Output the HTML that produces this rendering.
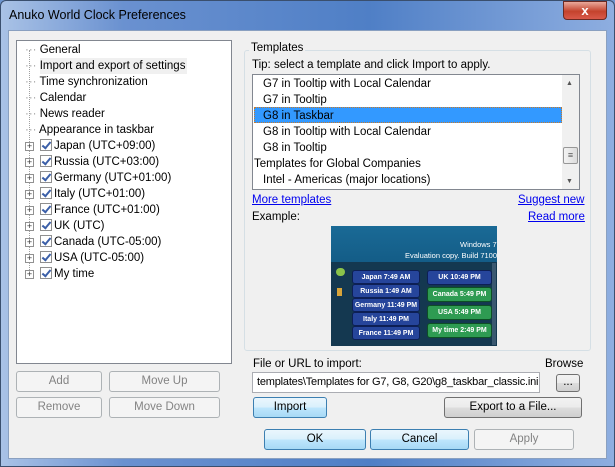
<!DOCTYPE html><html><head><style>
*{margin:0;padding:0;box-sizing:border-box}
body{width:615px;height:467px;overflow:hidden;font-family:"Liberation Sans",sans-serif;font-size:11.5px;color:#000;position:relative;background:#6d95cf}
.a{position:absolute;white-space:nowrap}
.title{left:0;top:0;width:615px;height:467px;border-radius:6px 6px 0 0;background:linear-gradient(90deg,#a9c2e6 0%,#6a91d0 20%,#4f7fc6 60%,#8eaee0 100%);border:1px solid #3a4f6e}
.client{left:8px;top:30px;width:599px;height:429px;background:#f0f0f0;border:1px solid #8aa0c0}
.btn{position:absolute;border:1px solid #707070;border-radius:3px;background:linear-gradient(#f2f2f2 0%,#ebebeb 50%,#dddddd 51%,#cfcfcf 100%);text-align:center;line-height:18px}
.dis{border-color:#adb2b5;background:#f4f4f4;color:#838383}
.blue{border-color:#3c7fb1;background:linear-gradient(#eaf6fd 0%,#d9f0fc 50%,#bee6fd 51%,#a7d9f5 100%)}
.tree div{position:absolute;left:0;white-space:nowrap;height:16px;line-height:16px}
.cb{display:inline-block;width:12px;height:12px;border:1px solid #8f8f8f;background:#fff;vertical-align:-2px;margin-right:2px;position:relative}
.cb:after{content:"";position:absolute;left:3px;top:0px;width:3px;height:7px;border:solid #3b5fa8;border-width:0 2px 2px 0;transform:rotate(40deg)}
.pl{display:inline-block;width:9px;height:9px;border:1px solid #919191;background:#fff;font-size:9px;line-height:7px;text-align:center;color:#333;vertical-align:0;margin-right:6px}
a{color:#0000ee;text-decoration:underline}
.chip{position:absolute;height:14px;border-radius:3px;color:#fff;font-size:7px;line-height:13px;text-align:center;font-weight:bold;overflow:hidden}
.bc{background:#26459b;border:1px solid #0d1f55}
.gc{background:#2e9b52;border:1px solid #0d4f25}
</style></head><body>
<div class="a title"></div>
<div class="a" style="left:9px;top:8px;font-size:12.5px;color:#000">Anuko World Clock Preferences</div>
<div class="a" style="left:563px;top:1px;width:44px;height:19px;border:1px solid #6b2a23;border-radius:0 0 4px 4px;background:linear-gradient(#e9a99c,#c4432d 55%,#d9594a);color:#fff;text-align:center;font-weight:bold;font-size:13px;line-height:17px">x</div>
<div class="a client"></div>

<div class="a" style="left:16px;top:40px;width:216px;height:324px;background:#fff;border:1px solid #828790"></div>
<div class="a" style="left:40px;top:58px;width:147px;height:16px;background:#f0f0f0"></div>
<div class="a" style="left:29px;top:50px;height:226px;border-left:1px dotted #a0a0a0"></div>
<div class="a tree" style="left:25px;top:42px;width:200px">
<div style="top:0"><span style="color:#a0a0a0">···</span> General</div>
<div style="top:16px"><span style="color:#a0a0a0">···</span> Import and export of settings</div>
<div style="top:32px"><span style="color:#a0a0a0">···</span> Time synchronization</div>
<div style="top:48px"><span style="color:#a0a0a0">···</span> Calendar</div>
<div style="top:64px"><span style="color:#a0a0a0">···</span> News reader</div>
<div style="top:80px"><span style="color:#a0a0a0">···</span> Appearance in taskbar</div>
<div style="top:96px"><span class="pl">+</span><span class="cb"></span>Japan (UTC+09:00)</div>
<div style="top:112px"><span class="pl">+</span><span class="cb"></span>Russia (UTC+03:00)</div>
<div style="top:128px"><span class="pl">+</span><span class="cb"></span>Germany (UTC+01:00)</div>
<div style="top:144px"><span class="pl">+</span><span class="cb"></span>Italy (UTC+01:00)</div>
<div style="top:160px"><span class="pl">+</span><span class="cb"></span>France (UTC+01:00)</div>
<div style="top:176px"><span class="pl">+</span><span class="cb"></span>UK (UTC)</div>
<div style="top:192px"><span class="pl">+</span><span class="cb"></span>Canada (UTC-05:00)</div>
<div style="top:208px"><span class="pl">+</span><span class="cb"></span>USA (UTC-05:00)</div>
<div style="top:224px"><span class="pl">+</span><span class="cb"></span>My time</div>
</div>

<div class="btn dis" style="left:16px;top:371px;width:86px;height:21px">Add</div>
<div class="btn dis" style="left:109px;top:371px;width:111px;height:21px">Move Up</div>
<div class="btn dis" style="left:16px;top:397px;width:86px;height:21px">Remove</div>
<div class="btn dis" style="left:109px;top:397px;width:111px;height:21px">Move Down</div>

<div class="a" style="left:244px;top:50px;width:347px;height:301px;border:1px solid #d5dfe5;border-radius:3px"></div>
<div class="a" style="left:249px;top:42px;background:#f0f0f0;padding:0 2px">Templates</div>
<div class="a" style="left:252px;top:59px">Tip: select a template and click Import to apply.</div>
<div class="a" style="left:252px;top:74px;width:328px;height:116px;background:#fff;border:1px solid #828790"></div>
<div class="a" style="left:254px;top:107px;width:308px;height:16px;background:#3399ff;border:1px dotted #c87a2a"></div>
<div class="a" style="left:263px;top:76px;line-height:16px">G7 in Tooltip with Local Calendar<br>G7 in Tooltip<br>G8 in Taskbar<br>G8 in Tooltip with Local Calendar<br>G8 in Tooltip</div>
<div class="a" style="left:254px;top:156px;line-height:16px">Templates for Global Companies</div>
<div class="a" style="left:263px;top:172px;line-height:16px">Intel - Americas (major locations)</div>
<div class="a" style="left:562px;top:75px;width:17px;height:114px;background:#f0f0f0"></div>
<div class="a" style="left:566px;top:80px;font-size:7px;color:#555">▲</div>
<div class="a" style="left:566px;top:178px;font-size:7px;color:#555">▼</div>
<div class="a" style="left:563px;top:147px;width:15px;height:17px;border:1px solid #979797;border-radius:2px;background:linear-gradient(90deg,#f3f3f3,#dcdcdc);font-size:9px;text-align:center;line-height:14px;color:#555">≡</div>
<div class="a" style="left:252px;top:194px"><a>More templates</a></div>
<div class="a" style="left:518px;top:194px"><a>Suggest new</a></div>
<div class="a" style="left:252px;top:211px">Example:</div>
<div class="a" style="left:528px;top:211px"><a>Read more</a></div>

<div class="a" style="left:331px;top:226px;width:166px;height:120px;background:linear-gradient(#1a6a96,#0d4f78 60%,#0a4368);overflow:hidden">
<div class="a" style="left:0;top:36px;width:166px;height:84px;background:#143850"></div>
<div class="a" style="left:129px;top:14px;color:#fff;font-size:7.5px">Windows 7</div>
<div class="a" style="left:74px;top:25px;color:#fff;font-size:7.5px">Evaluation copy. Build 7100</div>
<div class="a" style="left:5px;top:42px;width:9px;height:8px;background:#8bc34a;border-radius:4px"></div>
<div class="a" style="left:6px;top:62px;width:5px;height:8px;background:#d8a43a"></div>
<div class="a" style="left:161px;top:37px;width:4px;height:82px;background:#3a5870"></div>
<div class="chip bc" style="left:21px;top:44px;width:68px">Japan 7:49 AM</div>
<div class="chip bc" style="left:21px;top:58px;width:68px">Russia 1:49 AM</div>
<div class="chip bc" style="left:21px;top:72px;width:68px">Germany 11:49 PM</div>
<div class="chip bc" style="left:21px;top:86px;width:68px">Italy 11:49 PM</div>
<div class="chip bc" style="left:21px;top:100px;width:68px">France 11:49 PM</div>
<div class="chip bc" style="left:96px;top:44px;width:65px;height:15px">UK 10:49 PM</div>
<div class="chip gc" style="left:96px;top:61px;width:65px;height:15px">Canada 5:49 PM</div>
<div class="chip gc" style="left:96px;top:79px;width:65px;height:15px">USA 5:49 PM</div>
<div class="chip gc" style="left:96px;top:97px;width:65px;height:15px">My time 2:49 PM</div>
</div>

<div class="a" style="left:253px;top:358px">File or URL to import:</div>
<div class="a" style="left:545px;top:358px">Browse</div>
<div class="a" style="left:252px;top:372px;width:288px;height:21px;background:#fff;border:1px solid #abadb3;padding-left:4px;line-height:19px;font-size:11px;letter-spacing:-0.2px;overflow:hidden">templates\Templates for G7, G8, G20\g8_taskbar_classic.ini</div>
<div class="btn" style="left:556px;top:374px;width:24px;height:18px;line-height:14px">...</div>
<div class="btn blue" style="left:253px;top:397px;width:74px;height:21px">Import</div>
<div class="btn" style="left:444px;top:397px;width:138px;height:21px">Export to a File...</div>
<div class="btn blue" style="left:264px;top:429px;width:102px;height:21px">OK</div>
<div class="btn blue" style="left:370px;top:429px;width:99px;height:21px">Cancel</div>
<div class="btn dis" style="left:474px;top:429px;width:100px;height:21px">Apply</div>
</body></html>
